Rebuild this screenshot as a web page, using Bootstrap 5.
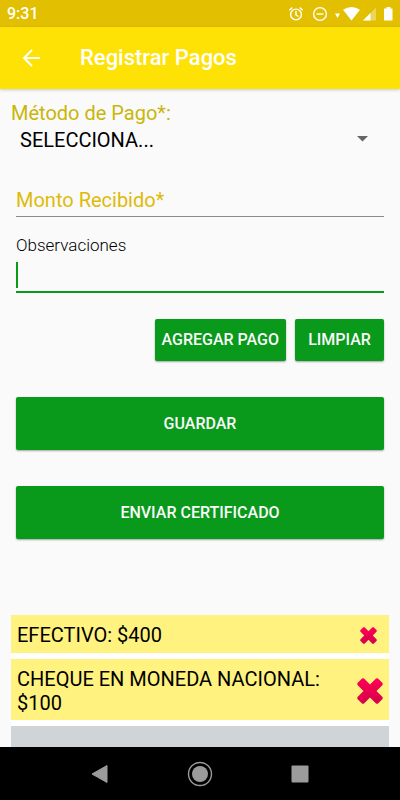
<!DOCTYPE html>
<html lang="es">
<head>
<meta charset="utf-8">
<meta name="viewport" content="width=device-width, initial-scale=1">
<title>Registrar Pagos</title>
<link href="https://cdn.jsdelivr.net/npm/bootstrap@5.3.0/dist/css/bootstrap.min.css" rel="stylesheet">
<style>
  body { font-family: Roboto, "Liberation Sans", sans-serif; background: #fafafa; color: #000; }
  svg { display: block; flex: none; }
  .status-bar { background: #e2bf00; height: 27px; padding: 0 6px 0 7px; font-size: 16px; font-weight: 500; line-height: 27px; }
  .app-bar { background: #ffe205; height: 62px; padding: 0 20px; gap: 37px; box-shadow: 0 1px 3px rgba(0,0,0,.2); z-index: 1; }
  .app-title { font-size: 22px; line-height: 28px; font-weight: 500; }
  .app-main { padding: 12px 11px 0; min-height: 0; }
  .method-label { color: #c9b60a; font-size: 20px; line-height: 24px; }
  .method-select { appearance: none; height: 30px; padding: 0 40px 0 9px; font-size: 20px; line-height: 30px; color: #000; }
  .select-caret { right: 21px; top: 11px; pointer-events: none; }
  .fields { padding: 0 5px; }
  .line-input { border-radius: 0; padding: 0; height: 34px; font-size: 20px; line-height: 24px; outline: 0; }
  .amount-input { margin-top: 28px; border-bottom: 1px solid #8c8c8c !important; }
  .amount-input::placeholder { color: #dfba08; opacity: 1; }
  .notes-label { margin-top: 18px; font-size: 17px; line-height: 20px; font-weight: 300; }
  .notes-box { margin-top: 4px; }
  .notes-input { border-bottom: 2px solid #09991b !important; caret-color: transparent; }
  .text-cursor { left: 0; top: 3px; width: 2px; height: 26px; background: #09991b; }
  .btn-go { --bs-btn-color: #fafafa; --bs-btn-bg: #09991b; --bs-btn-hover-color: #fff; --bs-btn-hover-bg: #08851a;
    --bs-btn-border-width: 0; --bs-btn-border-radius: 2px; --bs-btn-font-size: 16px; --bs-btn-font-weight: 500; --bs-btn-line-height: 20px;
    --bs-btn-padding-x: 7px; --bs-btn-padding-y: 0px; box-shadow: 0 1px 2px rgba(0,0,0,.35); }
  .small-actions { gap: 9px; margin-top: 26px; }
  .small-actions .btn-go { height: 42px; min-width: 89px; }
  .btn-wide { height: 53px; margin-top: 36px; }
  .payments { margin-top: 76px; gap: 6px; background: #fff; font-size: 20px; line-height: 24px; }
  .payment { background: #fff27f; padding: 8px 6px 6px; min-height: 38px; }
  .payment-double { padding-bottom: 5px; }
  .payment-empty { background: #d0d4d7; min-height: 40px; }
  .remove-btn { width: 30px; margin-left: 28px; }
  .nav-keys { height: 53px; background: #000; }
  .nav-keys .btn { width: 100px; }
</style>
<script src="https://cdn.jsdelivr.net/npm/bootstrap@5.3.0/dist/js/bootstrap.bundle.min.js"></script>
</head>
<body>
<div class="d-flex flex-column vh-100 overflow-hidden">
  <div class="status-bar d-flex align-items-center justify-content-between text-white flex-shrink-0">
    <span>9:31</span>
    <svg width="106" height="18" viewBox="0 0 106 18" fill="none" stroke="#fff" aria-hidden="true">
      <g stroke-width="1.4">
        <circle cx="8" cy="9.500" r="5.400"/><path d="M8 6v4l2.600 1.500M1.300 5.200l3-2.600M14.700 5.200l-3-2.600"/>
        <circle cx="32" cy="9" r="6.400"/><path d="M28.500 9h7"/>
      </g>
      <g fill="#fff" stroke="none">
        <path d="M47 8.500h5L49.500 13z"/>
        <path d="M55 4.800Q63.500-.8 72 4.800L63.500 15.500z"/>
        <path d="M75 15.500L88 2.500v13z" opacity=".35"/><path d="M75 15.500l7.500-7.500v7.500z"/>
        <path d="M98.500 2h4v1.500h2v12h-8.500v-12h2.500z"/>
      </g>
    </svg>
  </div>
  <header class="app-bar d-flex align-items-center flex-shrink-0 position-relative">
    <button type="button" class="btn p-0 border-0" aria-label="Volver">
      <svg width="23" height="24" viewBox="0 0 23 24" fill="none" stroke="#fff" stroke-width="2"><path d="M20 12H4M12 4l-8 8 8 8"/></svg>
    </button>
    <h1 class="app-title text-white m-0">Registrar Pagos</h1>
  </header>
  <main class="app-main flex-grow-1 overflow-hidden">
    <form>
      <label for="metodo" class="method-label d-block">Método de Pago*:</label>
      <div class="position-relative">
        <select id="metodo" class="method-select w-100 border-0 bg-transparent"><option>SELECCIONA...</option></select>
        <svg class="select-caret position-absolute" width="11" height="6" viewBox="0 0 11 6" aria-hidden="true"><path d="M0 0h11L5.500 5.500z" fill="#666"/></svg>
      </div>
      <div class="fields">
        <input id="monto" class="line-input amount-input d-block w-100 border-0 bg-transparent" type="text" inputmode="decimal" placeholder="Monto Recibido*" aria-label="Monto Recibido">
        <label for="observaciones" class="notes-label d-block">Observaciones</label>
        <div class="notes-box position-relative">
          <input id="observaciones" class="line-input notes-input d-block w-100 border-0 bg-transparent" type="text">
          <span class="text-cursor position-absolute"></span>
        </div>
        <div class="small-actions d-flex justify-content-end">
          <button type="button" class="btn btn-go">AGREGAR PAGO</button>
          <button type="reset" class="btn btn-go">LIMPIAR</button>
        </div>
        <button type="button" class="btn btn-go btn-wide w-100 d-block">GUARDAR</button>
        <button type="button" class="btn btn-go btn-wide w-100 d-block">ENVIAR CERTIFICADO</button>
      </div>
    </form>
    <ul class="payments list-unstyled d-flex flex-column mb-0">
      <li class="payment d-flex align-items-center">
        <span class="flex-grow-1">EFECTIVO: $400</span>
        <button type="button" class="remove-btn btn p-0 border-0 d-flex justify-content-center" aria-label="Quitar efectivo">
          <svg width="17" height="17" viewBox="0 0 26 26">
            <defs><linearGradient id="cross-red" x1="0" y1="0" x2="0" y2="1"><stop stop-color="#ff0055"/><stop offset="1" stop-color="#d5004a"/></linearGradient></defs>
            <path fill="url(#cross-red)" d="M5 .5q1-.5 2 0l6 6 6-6q1-.5 2 0L25.500 5q.5 1 0 2l-6 6 6 6q.5 1 0 2L21 25.500q-1 .5-2 0l-6-6-6 6q-1 .5-2 0L.5 21q-.5-1 0-2l6-6-6-6q-.5-1 0-2z"/></svg>
        </button>
      </li>
      <li class="payment payment-double d-flex align-items-center">
        <span class="flex-grow-1">CHEQUE EN MONEDA NACIONAL: $100</span>
        <button type="button" class="remove-btn btn p-0 border-0 d-flex justify-content-center" aria-label="Quitar cheque">
          <svg width="26" height="26" viewBox="0 0 26 26"><path fill="url(#cross-red)" d="M5 .5q1-.5 2 0l6 6 6-6q1-.5 2 0L25.500 5q.5 1 0 2l-6 6 6 6q.5 1 0 2L21 25.500q-1 .5-2 0l-6-6-6 6q-1 .5-2 0L.5 21q-.5-1 0-2l6-6-6-6q-.5-1 0-2z"/></svg>
        </button>
      </li>
      <li class="payment-empty"></li>
    </ul>
  </main>
  <nav class="nav-keys d-flex justify-content-center align-items-center flex-shrink-0" aria-label="Sistema">
    <button type="button" class="btn p-0 border-0 d-flex justify-content-center" aria-label="Atrás"><svg width="20" height="20" viewBox="0 0 20 20"><path d="M17 1.500v17L2 10z" fill="#9b9b9b" stroke="#9b9b9b" stroke-linejoin="round"/></svg></button>
    <button type="button" class="btn p-0 border-0 d-flex justify-content-center" aria-label="Inicio"><svg width="26" height="26" viewBox="0 0 26 26"><circle cx="13" cy="13" r="11.500" fill="none" stroke="#9b9b9b" stroke-width="1.400"/><circle cx="13" cy="13" r="8" fill="#9b9b9b"/></svg></button>
    <button type="button" class="btn p-0 border-0 d-flex justify-content-center" aria-label="Recientes"><svg width="18" height="18" viewBox="0 0 18 18"><rect x=".5" y=".5" width="17" height="17" rx="1" fill="#9b9b9b"/></svg></button>
  </nav>
</div>
</body>
</html>
